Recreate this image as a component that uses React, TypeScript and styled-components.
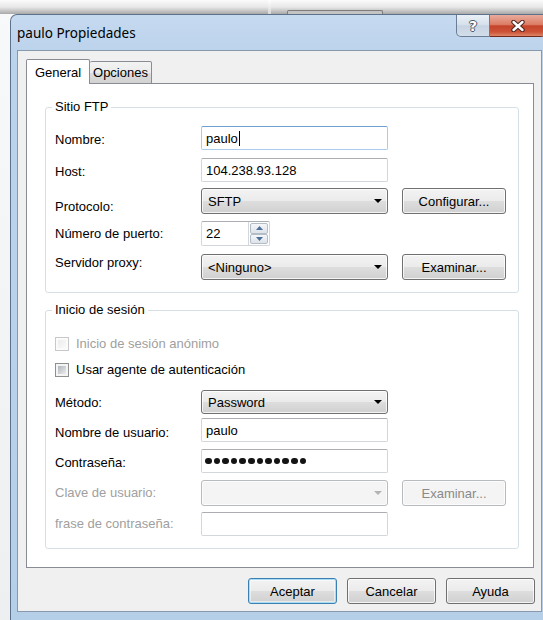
import React from "react";
import styled, { createGlobalStyle, css } from "styled-components";

/*--------------------------------------------------------------*/

const GlobalStyle = createGlobalStyle`
  *, *::before, *::after {
    box-sizing: border-box;
  }
  html, body {
    margin: 0;
    padding: 0;
  }
  body {
    width: 543px;
    height: 620px;
    overflow: hidden;
    background: #f3f4f6;
    font-family: "Liberation Sans", Arial, sans-serif;
    font-size: 13px;
    color: #000;
  }
`;

const GREY_TEXT = "#a0a0a0";
const BUTTON_FACE = css`
  border: 1px solid #707070;
  border-radius: 3px;
  background: linear-gradient(#f3f3f3 0%, #ebebeb 48%, #dddddd 52%, #d0d0d0 100%);
  box-shadow: inset 0 0 0 1px rgba(255, 255, 255, 0.75);
`;
const BUTTON_FACE_OFF = css`
  border: 1px solid #b7bbbe;
  border-radius: 3px;
  background: #f4f4f4;
  box-shadow: inset 0 0 0 1px #fcfcfc;
  color: #8a8a8a;
`;

/*--------------------------------------------------------------*/

const DropArrow = ({ off }: { off?: boolean }) => (
  <svg width="8" height="4" viewBox="0 0 8 4">
    <path d="M0 0h8L4 4z" fill={off ? "#b3b3b3" : "#000"} />
  </svg>
);

const SpinArrow = ({ up }: { up?: boolean }) => (
  <svg width="7" height="4" viewBox="0 0 7 4">
    <path d={up ? "M0 4L3.5 0L7 4z" : "M0 0h7L3.5 4z"} fill="#4f6f98" />
  </svg>
);

const CloseGlyph = () => (
  <svg width="16" height="12" viewBox="0 0 16 12">
    <path d="M3.5 2L12.5 10M12.5 2L3.5 10" stroke="#4d2620" strokeWidth="4.4" strokeLinecap="round" />
    <path d="M3.5 2L12.5 10M12.5 2L3.5 10" stroke="#fff" strokeWidth="2.4" strokeLinecap="round" />
  </svg>
);

/*--------------------------------------------------------------*/

export default function App() {
  return (
    <>
      <GlobalStyle />
      <Desktop>
        <BehindBar>
          <BehindSeparator />
          <BehindTab />
        </BehindBar>

        <Window>
          <TitleBar>
            <Caption>paulo Propiedades</Caption>
            <CaptionButtons>
              <CaptionButton>
                <HelpGlyph>?</HelpGlyph>
              </CaptionButton>
              <CaptionButton $close>
                <CloseGlyph />
              </CaptionButton>
            </CaptionButtons>
          </TitleBar>

          <Client>
            <TabStrip>
              <Tab $active>General</Tab>
              <Tab>Opciones</Tab>
            </TabStrip>

            <TabPage>
              {/* -------------------------------------------------------------- */}
              <GroupBox>
                <GroupTitle>Sitio FTP</GroupTitle>

                <Row $top={0} $h={24}>
                  <Label $drop={6}>Nombre:</Label>
                  <TextBox $focus>
                    paulo
                    <Caret />
                  </TextBox>
                </Row>

                <Row $top={8} $h={24}>
                  <Label $drop={6}>Host:</Label>
                  <TextBox>104.238.93.128</TextBox>
                </Row>

                <Row $top={6} $h={26}>
                  <Label $drop={11}>Protocolo:</Label>
                  <ComboBox>
                    SFTP
                    <DropArrow />
                  </ComboBox>
                  <PushButton>Configurar...</PushButton>
                </Row>

                <Row $top={7} $h={25}>
                  <Label $drop={5}>Número de puerto:</Label>
                  <UpDown>
                    <UpDownText>22</UpDownText>
                    <SpinColumn>
                      <SpinButton>
                        <SpinArrow up />
                      </SpinButton>
                      <SpinButton>
                        <SpinArrow />
                      </SpinButton>
                    </SpinColumn>
                  </UpDown>
                </Row>

                <Row $top={8} $h={26}>
                  <Label $drop={1}>Servidor proxy:</Label>
                  <ComboBox>
                    {"<Ninguno>"}
                    <DropArrow />
                  </ComboBox>
                  <PushButton>Examinar...</PushButton>
                </Row>
              </GroupBox>

              {/* -------------------------------------------------------------- */}
              <GroupBox>
                <GroupTitle>Inicio de sesión</GroupTitle>

                <CheckRow $top={8}>
                  <CheckBox $off />
                  <CheckText $off>Inicio de sesión anónimo</CheckText>
                </CheckRow>

                <CheckRow $top={12}>
                  <CheckBox />
                  <CheckText>Usar agente de autenticación</CheckText>
                </CheckRow>

                <Row $top={13} $h={24}>
                  <Label $drop={5}>Método:</Label>
                  <ComboBox>
                    Password
                    <DropArrow />
                  </ComboBox>
                </Row>

                <Row $top={4} $h={24}>
                  <Label $drop={7}>Nombre de usuario:</Label>
                  <TextBox>paulo</TextBox>
                </Row>

                <Row $top={7} $h={24}>
                  <Label $drop={6}>Contraseña:</Label>
                  <TextBox>
                    <PasswordDots>
                      {Array.from({ length: 12 }, (_, i) => (
                        <Dot key={i} />
                      ))}
                    </PasswordDots>
                  </TextBox>
                </Row>

                <Row $top={7} $h={26}>
                  <Label $drop={5} $off>
                    Clave de usuario:
                  </Label>
                  <ComboBox $off>
                    <span />
                    <DropArrow off />
                  </ComboBox>
                  <PushButton $off>Examinar...</PushButton>
                </Row>

                <Row $top={6} $h={24}>
                  <Label $drop={4} $off>
                    frase de contraseña:
                  </Label>
                  <TextBox />
                </Row>
              </GroupBox>
            </TabPage>

            <ButtonRow>
              <PushButton $default>Aceptar</PushButton>
              <PushButton>Cancelar</PushButton>
              <PushButton>Ayuda</PushButton>
            </ButtonRow>
          </Client>
        </Window>
      </Desktop>
    </>
  );
}

/*--------------------------------------------------------------*/

const Desktop = styled.div`
  display: flex;
  flex-direction: column;
  width: 543px;
  height: 620px;
  overflow: hidden;
  background: linear-gradient(160deg, #f8f9fa 0%, #eef0f2 70%, #e9ebee 100%);
`;

const BehindBar = styled.div`
  flex: 0 0 14px;
  display: flex;
  align-items: flex-end;
  padding-left: 268px;
  background: linear-gradient(#fbfbfb 0%, #e8e8e8 50%, #a9a9a9 100%);
`;
const BehindSeparator = styled.div`
  width: 3px;
  height: 14px;
  background: linear-gradient(#ffffff, #d8d8d8);
`;
const BehindTab = styled.div`
  width: 96px;
  height: 4px;
  margin-left: 16px;
  border: 1px solid #7c7c7c;
  border-bottom: none;
  border-radius: 2px 2px 0 0;
  background: #c4c4c4;
`;

/*--------------------------------------------------------------*/

const Window = styled.div`
  flex: 1;
  display: flex;
  flex-direction: column;
  width: 539px;
  margin-left: 10px;
  padding: 0 6px 8px;
  border: 1px solid #5d718a;
  border-bottom: none;
  border-radius: 7px 7px 0 0;
  background: linear-gradient(180deg, #c6daf0 0%, #bcd3ec 36px, #b6cfe9 100%);
`;

const TitleBar = styled.div`
  flex: 0 0 35px;
  display: flex;
  align-items: flex-start;
`;
const Caption = styled.div`
  padding-top: 9px;
  font-family: "Noto Sans", "Open Sans", sans-serif;
  font-size: 13.5px;
  line-height: 18px;
  color: #000;
`;
const CaptionButtons = styled.div`
  display: flex;
  height: 22px;
  margin-left: auto;
  margin-right: -4px;
`;
const CaptionButton = styled.div<{ $close?: boolean }>`
  display: flex;
  align-items: center;
  justify-content: center;
  height: 100%;
  border: 1px solid #6b7d94;
  border-top: none;

  ${({ $close }) =>
    $close
      ? css`
          width: 56px;
          border-color: #70291d;
          border-left: none;
          border-radius: 0 0 5px 0;
          background: linear-gradient(
            180deg,
            #e9ab9d 0%,
            #dc7d65 45%,
            #c5442b 52%,
            #cc5236 80%,
            #de8466 100%
          );
        `
      : css`
          width: 34px;
          border-radius: 0 0 0 5px;
          background: linear-gradient(180deg, #eaf0f6 0%, #d7e1ec 45%, #c6d3e2 52%, #d3deea 100%);
        `}
`;
const HelpGlyph = styled.span`
  font-family: "DejaVu Sans", sans-serif;
  font-weight: bold;
  font-size: 14px;
  line-height: 14px;
  color: #fff;
  text-shadow: 1px 0 0 #4b5867, -1px 0 0 #4b5867, 0 1px 0 #4b5867, 0 -1px 0 #4b5867;
`;

/*--------------------------------------------------------------*/

const Client = styled.div`
  flex: 0 0 562px;
  display: flex;
  flex-direction: column;
  padding: 8px 6px 7px 8px;
  border: 1px solid #8898ad;
  background: #f0f0f0;
`;

const TabStrip = styled.div`
  position: relative;
  z-index: 1;
  display: flex;
  align-items: flex-end;
  height: 25px;
  margin-bottom: -1px;
`;
const Tab = styled.div<{ $active?: boolean }>`
  display: flex;
  align-items: center;
  justify-content: center;
  border: 1px solid #898c95;
  border-radius: 2px 2px 0 0;

  ${({ $active }) =>
    $active
      ? css`
          width: 64px;
          height: 25px;
          border-bottom: none;
          background: #fff;
        `
      : css`
          width: 62px;
          height: 23px;
          border-left: none;
          background: linear-gradient(#f3f3f3 0%, #ebebeb 50%, #dddddd 51%, #d2d2d2 100%);
        `}
`;

const TabPage = styled.div`
  display: flex;
  flex-direction: column;
  gap: 9px;
  height: 485px;
  margin-right: 1px;
  padding: 15px 14px 0 18px;
  border: 1px solid #898c95;
  background: #fff;
`;

/*--------------------------------------------------------------*/

const GroupBox = styled.fieldset`
  display: flex;
  flex-direction: column;
  min-width: 0;
  margin: 0;
  padding: 11px 12px 12px 9px;
  border: 1px solid #d5dfe5;
  border-radius: 3px;
`;
const GroupTitle = styled.legend`
  margin-left: -3px;
  padding: 0 3px;
  font-size: 13px;
  line-height: 16px;
`;

// label | field | side button, field starting at the same x on every row
const Row = styled.div<{ $top: number; $h: number }>`
  display: grid;
  grid-template-columns: 132px 187px 104px;
  grid-template-rows: 100%;
  column-gap: 14px;
  height: ${({ $h }) => $h}px;
  margin-top: ${({ $top }) => $top}px;
`;
const Label = styled.div<{ $drop: number; $off?: boolean }>`
  align-self: start;
  padding-top: ${({ $drop }) => $drop}px;
  line-height: 16px;
  white-space: nowrap;
  color: ${({ $off }) => ($off ? GREY_TEXT : "#000")};
`;

const TextBox = styled.div<{ $focus?: boolean }>`
  display: flex;
  align-items: center;
  padding: 0 4px;
  background: #fff;
  border: 1px solid ${({ $focus }) => ($focus ? "#a9cbec" : "#d3d7dc")};
  border-top-color: ${({ $focus }) => ($focus ? "#6d9fd3" : "#abadb3")};
  border-radius: 2px;
  white-space: nowrap;
`;
const Caret = styled.span`
  width: 1px;
  height: 15px;
  margin-left: 1px;
  background: #000;
`;

const PasswordDots = styled.span`
  display: flex;
  gap: 2px;
  margin-left: -1px;
`;
const Dot = styled.span`
  width: 6.6px;
  height: 6.6px;
  border-radius: 50%;
  background: #141414;
`;

const ComboBox = styled.div<{ $off?: boolean }>`
  display: flex;
  align-items: center;
  justify-content: space-between;
  padding: 0 5px 0 6px;
  ${({ $off }) => ($off ? BUTTON_FACE_OFF : BUTTON_FACE)}
`;

const PushButton = styled.div<{ $default?: boolean; $off?: boolean }>`
  display: flex;
  align-items: center;
  justify-content: center;
  height: 26px;
  ${({ $off }) => ($off ? BUTTON_FACE_OFF : BUTTON_FACE)}

  ${({ $default }) =>
    $default &&
    css`
      border-color: #3c7fb1;
      box-shadow: inset 0 0 0 1px #a9dcf6, inset 0 0 0 2px rgba(255, 255, 255, 0.5);
    `}
`;

const UpDown = styled.div`
  display: flex;
  width: 69px;
  border: 1px solid #d3d7dc;
  border-top-color: #abadb3;
  border-radius: 2px;
  background: #fff;
`;
const UpDownText = styled.div`
  flex: 1;
  display: flex;
  align-items: center;
  padding-left: 4px;
`;
const SpinColumn = styled.div`
  display: flex;
  flex-direction: column;
  width: 21px;
  padding: 1px;
  border-left: 1px solid #d3d7dc;
`;
const SpinButton = styled.div`
  flex: 1;
  display: flex;
  align-items: center;
  justify-content: center;
  border: 1px solid #b4bcc6;
  border-radius: 2px;
  background: linear-gradient(#f5f7f9, #dde3ea);
`;

const CheckRow = styled.div<{ $top: number }>`
  display: flex;
  align-items: center;
  gap: 7px;
  height: 14px;
  margin-top: ${({ $top }) => $top}px;
`;
const CheckBox = styled.span<{ $off?: boolean }>`
  width: 14px;
  height: 14px;
  padding: 2px;
  border: 1px solid ${({ $off }) => ($off ? "#c6c8ca" : "#8e8f8f")};
  background: ${({ $off }) =>
    $off
      ? "linear-gradient(135deg, #ececec, #f9f9f9) content-box, #fbfbfb"
      : "linear-gradient(135deg, #b0b5bb, #ececed) content-box, #f4f4f4"};
`;
const CheckText = styled.span<{ $off?: boolean }>`
  line-height: 16px;
  color: ${({ $off }) => ($off ? GREY_TEXT : "#000")};
`;

const ButtonRow = styled.div`
  display: flex;
  justify-content: flex-end;
  gap: 10px;
  margin-top: 10px;

  & > * {
    width: 89px;
  }
`;
